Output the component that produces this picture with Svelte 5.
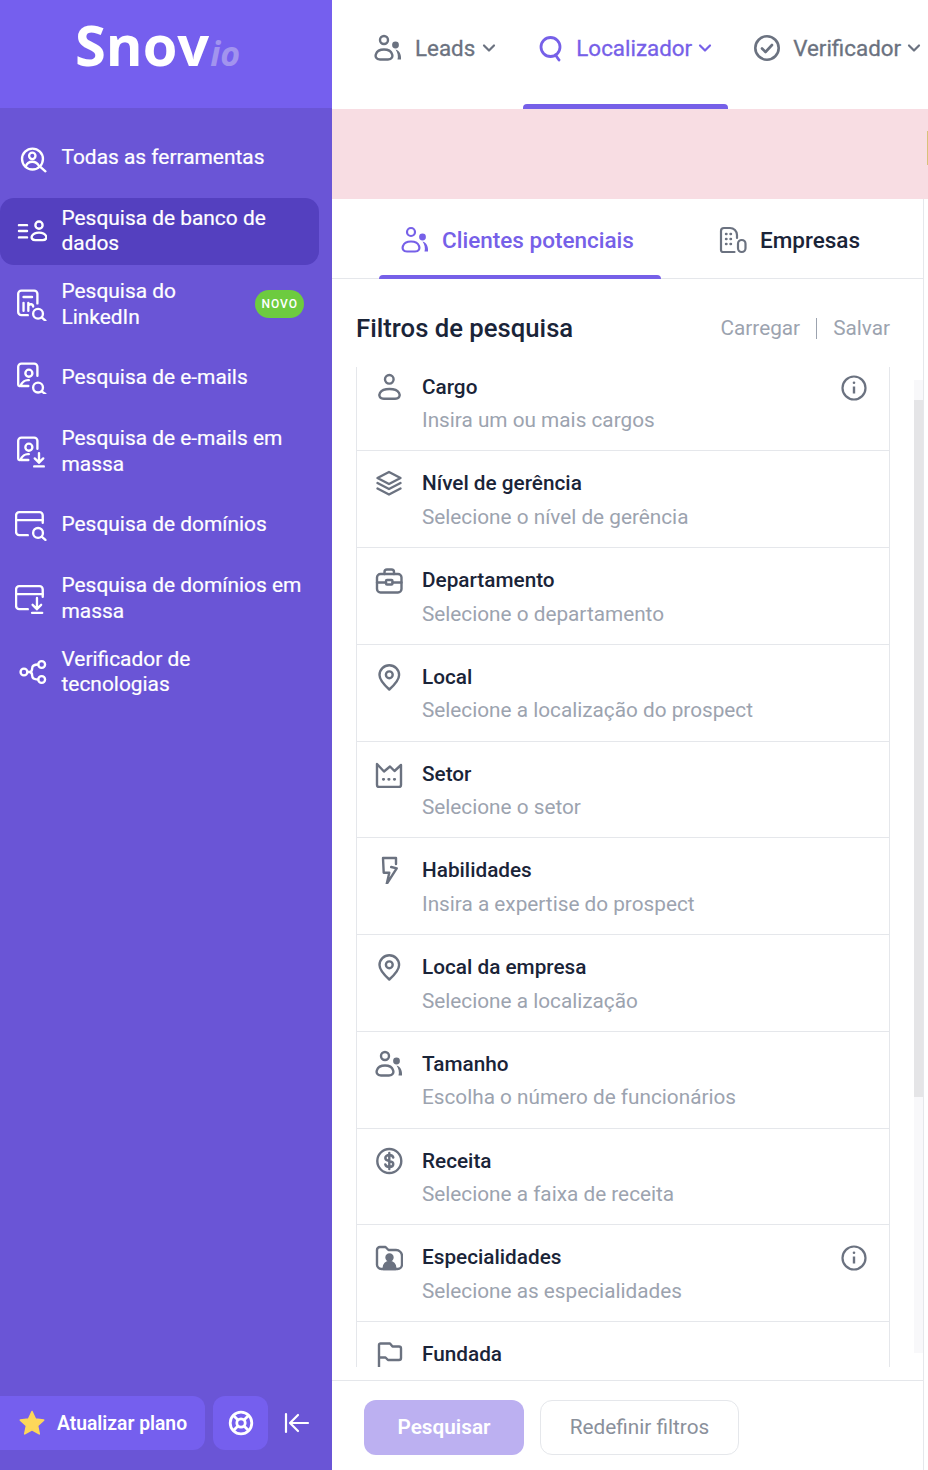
<script>
  const tools = [
    { label: 'Todas as ferramentas', icon: 'all' },
    { label: 'Pesquisa de banco de dados', icon: 'db', active: true },
    { label: 'Pesquisa do LinkedIn', icon: 'in', badge: 'NOVO', narrow: true },
    { label: 'Pesquisa de e-mails', icon: 'mail' },
    { label: 'Pesquisa de e-mails em massa', icon: 'maildown' },
    { label: 'Pesquisa de domínios', icon: 'domain' },
    { label: 'Pesquisa de domínios em massa', icon: 'domaindown' },
    { label: 'Verificador de tecnologias', icon: 'tech', narrow: true }
  ];

  const filters = [
    { title: 'Cargo', hint: 'Insira um ou mais cargos', icon: 'person', info: true },
    { title: 'Nível de gerência', hint: 'Selecione o nível de gerência', icon: 'layers' },
    { title: 'Departamento', hint: 'Selecione o departamento', icon: 'case' },
    { title: 'Local', hint: 'Selecione a localização do prospect', icon: 'pin' },
    { title: 'Setor', hint: 'Selecione o setor', icon: 'factory' },
    { title: 'Habilidades', hint: 'Insira a expertise do prospect', icon: 'bolt' },
    { title: 'Local da empresa', hint: 'Selecione a localização', icon: 'pin' },
    { title: 'Tamanho', hint: 'Escolha o número de funcionários', icon: 'people' },
    { title: 'Receita', hint: 'Selecione a faixa de receita', icon: 'dollar' },
    { title: 'Especialidades', hint: 'Selecione as especialidades', icon: 'folder', info: true },
    { title: 'Fundada', icon: 'flag' }
  ];
</script>

{#snippet chevron()}
  <svg class="chev" width="14" height="14" viewBox="0 0 14 14" fill="none" stroke="currentColor" stroke-width="2.200" stroke-linecap="round" stroke-linejoin="round"><path d="M2 4.500l5 5 5-5"/></svg>
{/snippet}

{#snippet people()}
  <circle cx="10" cy="6" r="4"/>
  <path d="M6 25.500c-4 0-5-3-4-5.500 1-3 4.500-4.500 8-4.500s7 1.500 8 4.500c1 2.500 0 5.500-4 5.500z"/>
  <circle cx="21.500" cy="11" r="3.400" fill="currentColor" stroke="none"/>
  <path d="M21.500 15.500c4 1 6 5 5.500 10h-3.500c1-3.500 0-7-2-10z" fill="currentColor" stroke="none"/>
{/snippet}

{#snippet toolIcon(name)}
  <svg width="32" height="32" viewBox="0 0 30 30" fill="none" stroke="currentColor" stroke-width="2.200" stroke-linecap="round" stroke-linejoin="round">
    {#if name === 'all'}
      <circle cx="16.400" cy="16" r="9.800"/><circle cx="16.200" cy="13" r="3"/><path d="M10 23c1-3 3.500-4.500 6.200-4.500s5 1.500 6.300 4"/><path d="M23.500 23l5 4.500"/>
    {:else if name === 'db'}
      <path d="M3.700 9.500h7.600M3.700 15h7.600M3.700 21h7.600"/><circle cx="22.500" cy="9.500" r="3.400"/><path d="M19 23.500c-3 0-4-2-3-4 1-2 3.500-3 6.500-3s5.500 1 6.500 3c1 2 0 4-3 4z"/>
    {:else if name === 'in'}
      <path d="M12 24.500H6a3 3 0 0 1-3-3V4.500a3 3 0 0 1 3-3h12a3 3 0 0 1 3 3v9"/><path d="M8 7.500h8M8 13v7.500M12.500 20.500V13M12.500 15.500c1.500-2 4.500-1.500 4.500 1"/><circle cx="21.600" cy="23.200" r="4.600"/><path d="M25 26.700l3.500 3"/>
    {:else if name === 'mail'}
      <path d="M21 13V4.500a3 3 0 0 0-3-3H6a3 3 0 0 0-3 3V21c0 1.500 1.500 2 2.500 1"/><circle cx="13" cy="10.500" r="3.300"/><path d="M5.500 22c1-3 4-5.500 7.500-5"/><path d="M5.500 22.500h7"/><circle cx="21.600" cy="24" r="4.600"/><path d="M25 27.500l3.500 2.500"/>
    {:else if name === 'maildown'}
      <path d="M21 12V4.500a3 3 0 0 0-3-3H6a3 3 0 0 0-3 3V21c0 1.500 1.500 2 2.500 1"/><circle cx="13" cy="10.500" r="3.300"/><path d="M5.500 22c1-3 4-5.500 7.500-5"/><path d="M5.500 22.500h7"/><path d="M22.500 16v9M18.500 21l4 4 4-4M18 28.500h9"/>
    {:else if name === 'domain'}
      <path d="M12 24.500H4a3 3 0 0 1-3-3V6a3 3 0 0 1 3-3h19a3 3 0 0 1 3 3v7"/><path d="M1 10.500h25"/><circle cx="21.600" cy="22.400" r="4.600"/><path d="M25 26l3.500 3"/>
    {:else if name === 'domaindown'}
      <path d="M12 24.500H4a3 3 0 0 1-3-3V6a3 3 0 0 1 3-3h19a3 3 0 0 1 3 3v7"/><path d="M1 10.500h25"/><path d="M20.600 14v10.500M16.500 20.500l4 4 4-4M16 28h9.500"/>
    {:else if name === 'tech'}
      <circle cx="8.400" cy="15" r="3.200"/><circle cx="25" cy="8" r="3.200"/><circle cx="25" cy="22" r="3.200"/><path d="M11.600 15h2c2 0 2.500-1.500 2.500-3.500 0-2.500 1.500-3.500 5.700-3.500M13.600 15c2 0 2.500 1.500 2.500 3.500 0 2.500 1.500 3.500 5.700 3.500"/>
    {/if}
  </svg>
{/snippet}

{#snippet filterIcon(name)}
  <svg width="28" height="28" viewBox="0 0 28 28" fill="none" stroke="currentColor" stroke-width="2.400" stroke-linecap="round" stroke-linejoin="round">
    {#if name === 'person'}
      <circle cx="14.300" cy="6.300" r="4.300"/><path d="M9 25.800c-4.500 0-5.500-3.500-4-6 1.500-2.500 5-3.800 9.500-3.800s8 1.300 9.500 3.800c1.500 2.500.5 6-4 6z"/>
    {:else if name === 'layers'}
      <path d="M14 3l11.500 6L14 15 2.500 9z"/><path d="M2.500 14L14 20l11.500-6"/><path d="M2.500 19.500L14 25.500l11.500-6"/>
    {:else if name === 'case'}
      <path d="M9.500 8V6a2.500 2.500 0 0 1 2.500-2.500h4.500A2.500 2.500 0 0 1 19 6v2"/><rect x="2" y="8" width="24.500" height="18.500" rx="3.500"/><path d="M2 16.500h9M17.500 16.500h9"/><rect x="11" y="14" width="6.500" height="4.500" rx="1"/>
    {:else if name === 'pin'}
      <path d="M14.300 26.500c-5-4.500-9.800-9.500-9.800-14.500a9.800 9.800 0 0 1 19.600 0c0 5-4.800 10-9.800 14.500z"/><circle cx="14.300" cy="11.800" r="3.400"/>
    {:else if name === 'factory'}
      <path d="M2 4v21a2 2 0 0 0 2 2h20a2 2 0 0 0 2-2V5l-6.500 6-4.500-4.500-6 5z"/><path d="M8.300 19.300h.4M13.700 19.300h.4M19.300 19.300h.4" stroke-width="2.800"/>
    {:else if name === 'bolt'}
      <path d="M21 8V2H8l.7 14.700h5.600L11.700 28l10-15.700-5.500-1.300"/>
    {:else if name === 'people'}
      {@render people()}
    {:else if name === 'dollar'}
      <circle cx="14.300" cy="14" r="12"/><path d="M18.300 10.500c-.5-1.500-2-2.500-4-2.500-2.500 0-4 1.300-4 3s1.500 2.500 4 3 4 1.300 4 3-1.500 3-4 3c-2 0-3.500-1-4-2.500M14.300 6v16"/>
    {:else if name === 'folder'}
      <path d="M2 21V7a3 3 0 0 1 3-3h5.500l3 3H21a6 6 0 0 1 6 6v8.500a4.500 4.500 0 0 1-4.500 4.500h-16A4.500 4.500 0 0 1 2 21z"/><circle cx="14.500" cy="14.500" r="3" fill="currentColor"/><path d="M8.500 26c0-5 3-7 6-7s6 2 6 7z" fill="currentColor"/>
    {:else if name === 'flag'}
      <path d="M4 29V5a1.500 1.500 0 0 1 1.500-1.500H15l2.500 3H24a2 2 0 0 1 2 2V18a2 2 0 0 1-2 2H13l-2.500-2.500H4"/>
    {/if}
  </svg>
{/snippet}

<div class="page">
  <aside class="sidebar">
    <div class="logo"><span class="snov">Snov</span><span class="io">io</span></div>
    <nav class="tools">
      {#each tools as tool}
        <div class="tool" class:active={tool.active}>
          <span class="tool-icon">{@render toolIcon(tool.icon)}</span>
          <span class="tool-label" class:narrow={tool.narrow}>{tool.label}</span>
          {#if tool.badge}<span class="badge">{tool.badge}</span>{/if}
        </div>
      {/each}
    </nav>
    <div class="side-foot">
      <button class="upgrade">
        <svg width="26" height="26" viewBox="0 0 26 26"><path d="M13 1.500l3.500 7.600 8.200 1-6.100 5.600 1.700 8.200-7.300-4.100-7.300 4.100 1.700-8.200L1.300 10.100l8.200-1z" fill="#fdd75a" stroke="#fdd75a" stroke-width="1.500" stroke-linejoin="round"/></svg>
        Atualizar plano
      </button>
      <button class="help" aria-label="Ajuda">
        <svg width="26" height="26" viewBox="0 0 26 26" fill="none" stroke="currentColor" stroke-width="2.800"><circle cx="13" cy="13" r="10.800"/><circle cx="13" cy="13" r="4.200"/><path d="M5.500 5.500l4.700 4.700M20.500 5.500l-4.700 4.700M5.500 20.500l4.700-4.700M20.500 20.500l-4.700-4.700"/></svg>
      </button>
      <svg class="collapse" width="26" height="22" viewBox="0 0 26 22" fill="none" stroke="currentColor" stroke-width="2.200" stroke-linecap="round" stroke-linejoin="round"><path d="M2 2v18M24 11H7M14 3l-8 8 8 8"/></svg>
    </div>
  </aside>

  <main class="main">
    <header class="topnav">
      <div class="nav-item">
        <svg width="28" height="28" viewBox="0 0 28 28" fill="none" stroke="currentColor" stroke-width="2.400" stroke-linecap="round" stroke-linejoin="round">{@render people()}</svg>
        <span>Leads</span>{@render chevron()}
      </div>
      <div class="nav-item current">
        <svg width="26" height="28" viewBox="0 0 26 28" fill="none" stroke="currentColor" stroke-width="2.800" stroke-linecap="round"><circle cx="12.500" cy="13" r="9.500"/><path d="M17.500 21l3.500 5"/></svg>
        <span>Localizador</span>{@render chevron()}
      </div>
      <div class="nav-item">
        <svg width="28" height="28" viewBox="0 0 28 28" fill="none" stroke="currentColor" stroke-width="2.600" stroke-linecap="round" stroke-linejoin="round"><circle cx="14" cy="14" r="11.700"/><path d="M9 14.500l3.500 3.500 6.500-7"/></svg>
        <span>Verificador</span>{@render chevron()}
      </div>
    </header>

    <div class="notice"><span class="notice-edge"></span></div>

    <section class="panel">
      <div class="tabs">
        <div class="tab on">
          <svg width="28" height="28" viewBox="0 0 28 28" fill="none" stroke="currentColor" stroke-width="2.200" stroke-linecap="round" stroke-linejoin="round">{@render people()}</svg>
          Clientes potenciais
        </div>
        <div class="tab">
          <svg class="bld" width="28" height="28" viewBox="0 0 28 28" fill="none" stroke="currentColor" stroke-width="2.200" stroke-linecap="round" stroke-linejoin="round"><path d="M15.500 26H4a2 2 0 0 1-2-2V5a3 3 0 0 1 3-3h6a7 7 0 0 1 7 7v3"/><rect x="19" y="14" width="7.500" height="12" rx="3.700"/><path d="M7 8h.5M11.500 8h.5M7 13h.5M11.500 13h.5M7 18h.5M11.500 18h.5" stroke-width="2.400"/></svg>
          Empresas
        </div>
      </div>

      <div class="filters-head">
        <h2>Filtros de pesquisa</h2>
        <div class="head-links"><span>Carregar</span><i></i><span>Salvar</span></div>
      </div>

      <div class="scroll-area">
        <div class="filter-list">
          {#each filters as f}
            <div class="filter">
              <span class="filter-icon">{@render filterIcon(f.icon)}</span>
              <div class="filter-text">
                <div class="filter-title">{f.title}</div>
                {#if f.hint}<div class="filter-hint">{f.hint}</div>{/if}
              </div>
              {#if f.info}
                <svg class="info" width="26" height="26" viewBox="0 0 26 26" fill="none" stroke="currentColor" stroke-width="2.200"><circle cx="13" cy="13" r="11.500"/><path d="M13 11.500v7" stroke-width="2.400"/><circle cx="13" cy="7.800" r="1.300" fill="currentColor" stroke="none"/></svg>
              {/if}
            </div>
          {/each}
        </div>
        <div class="scrollbar"><div class="thumb"></div></div>
      </div>

      <div class="actions">
        <button class="primary">Pesquisar</button>
        <button class="secondary">Redefinir filtros</button>
      </div>
    </section>
  </main>
</div>

<style>
  :global(body) {
    margin: 0;
    background: #fff;
  }

  .page {
    display: flex;
    width: 928px;
    height: 1470px;
    overflow: hidden;
    font-family: Roboto, "Liberation Sans", sans-serif;
  }

  button {
    font-family: inherit;
    border: none;
    cursor: pointer;
  }

  /* sidebar */
  .sidebar {
    width: 332px;
    flex: none;
    display: flex;
    flex-direction: column;
    background: #6a55d6;
    color: #fff;
  }

  .logo {
    height: 108px;
    flex: none;
    background: #755fee;
    padding-left: 75px;
    box-sizing: border-box;
    line-height: 88px;
  }

  .snov {
    font-family: "Open Sans", sans-serif;
    font-weight: 700;
    font-size: 56px;
  }

  .io {
    font-family: "Open Sans", sans-serif;
    font-style: italic;
    font-weight: 700;
    font-size: 34px;
    color: #a294ee;
    margin-left: 1px;
  }

  .tools {
    flex: 1;
    display: flex;
    flex-direction: column;
    gap: 6.5px;
    padding: 16px 13px 0 0;
  }

  .tool {
    height: 67px;
    display: flex;
    align-items: center;
    padding: 0 15px;
    border-radius: 0 14px 14px 0;
    font-size: 20.900px;
    line-height: 25.500px;
    font-weight: 400;
    -webkit-text-stroke: 0.2px #fff;
  }

  .tool.active {
    background: #5440bf;
    border-radius: 14px;
  }

  .tool-icon {
    width: 46.500px;
    flex: none;
    display: flex;
  }

  .tool-label {
    flex: 1;
  }

  .tool-label.narrow {
    max-width: 150px;
  }

  .badge {
    margin: -1px 0 0 auto;
    background: #6dcb3f;
    font-size: 12px;
    font-weight: 500;
    letter-spacing: 1px;
    line-height: 28px;
    padding: 0 6px;
    border-radius: 14px;
    -webkit-text-stroke: 0;
  }

  .side-foot {
    display: flex;
    align-items: center;
    height: 54px;
    margin-bottom: 20px;
  }

  .upgrade {
    width: 205px;
    height: 54px;
    display: flex;
    align-items: center;
    gap: 12px;
    padding: 0 0 0 19px;
    background: #755fee;
    color: #fff;
    border-radius: 0 12px 12px 0;
    font-size: 19.300px;
    font-weight: 600;
  }

  .help {
    width: 55px;
    height: 54px;
    margin-left: 8px;
    display: flex;
    align-items: center;
    justify-content: center;
    padding: 0;
    background: #755fee;
    color: #fff;
    border-radius: 12px;
  }

  .collapse {
    margin-left: 16px;
  }

  /* main column */
  .main {
    flex: 1;
    min-width: 0;
    display: flex;
    flex-direction: column;
  }

  .topnav {
    height: 109px;
    flex: none;
    box-sizing: border-box;
    display: flex;
    align-items: center;
    gap: 42px;
    padding: 0 0 13px 42px;
    white-space: nowrap;
    color: #6b7280;
    font-size: 22.400px;
    -webkit-text-stroke: 0.3px currentColor;
  }

  .nav-item {
    position: relative;
    display: flex;
    align-items: center;
    gap: 12px;
  }

  .nav-item:first-child {
    gap: 13px;
  }

  .nav-item:last-child {
    margin-left: -1px;
  }

  .nav-item :global(.chev) {
    margin-left: -6px;
  }

  .nav-item.current {
    color: #7660e8;
  }

  .nav-item.current::after {
    content: '';
    position: absolute;
    left: -15px;
    right: -16px;
    top: 70px;
    height: 5px;
    background: #7660e8;
    border-radius: 4px 4px 0 0;
  }

  .notice {
    height: 90px;
    flex: none;
    position: relative;
    background: #f8dde3;
  }

  .notice-edge {
    position: absolute;
    right: 0;
    top: 22px;
    width: 1px;
    height: 34px;
    background: #d9c27a;
  }

  .panel {
    flex: 1;
    min-height: 0;
    display: flex;
    flex-direction: column;
    border-right: 1px solid #e5e7eb;
    margin-right: 4px;
  }

  .tabs {
    height: 80px;
    flex: none;
    box-sizing: border-box;
    display: flex;
    border-bottom: 1px solid #e5e7eb;
    padding-left: 47px;
    font-size: 22.500px;
    font-weight: 500;
    color: #1a2438;
  }

  .tab {
    position: relative;
    display: flex;
    align-items: center;
    gap: 13px;
    padding-top: 3px;
  }

  .tab :global(.bld) {
    color: #6b7280;
  }

  .tab.on {
    width: 282px;
    box-sizing: border-box;
    padding-right: 5px;
    justify-content: center;
    color: #7660e8;
  }

  .tab:not(.on) {
    margin-left: 58px;
  }

  .tab.on::after {
    content: '';
    position: absolute;
    left: 0;
    right: 0;
    bottom: -1px;
    height: 4px;
    background: #7660e8;
    border-radius: 4px 4px 0 0;
  }

  .filters-head {
    height: 88px;
    flex: none;
    box-sizing: border-box;
    display: flex;
    align-items: center;
    justify-content: space-between;
    padding: 10px 33px 0 24px;
  }

  h2 {
    margin: 0;
    font-size: 25.700px;
    font-weight: 500;
    color: #1a2438;
  }

  .head-links {
    display: flex;
    align-items: center;
    gap: 16px;
    font-size: 20.750px;
    color: #9ca3af;
  }

  .head-links i {
    width: 1px;
    height: 21px;
    background: #9ca3af;
  }

  .scroll-area {
    height: 1000px;
    flex: none;
    position: relative;
    overflow: hidden;
  }

  .filter-list {
    width: 534px;
    margin: -12.500px 0 0 24px;
    box-sizing: border-box;
    border-left: 1px solid #e5e7eb;
    border-right: 1px solid #e5e7eb;
  }

  .filter {
    height: 96.750px;
    box-sizing: border-box;
    display: flex;
    padding: 18px 22px 0 18px;
    border-bottom: 1px solid #e5e7eb;
  }

  .filter-icon {
    width: 47px;
    flex: none;
    display: flex;
    color: #6b7280;
  }

  .filter-text {
    flex: 1;
  }

  .filter-title {
    font-size: 20.750px;
    line-height: 28px;
    font-weight: 500;
    color: #1a2438;
  }

  .filter-hint {
    margin-top: 5.500px;
    font-size: 20.750px;
    line-height: 28px;
    color: #9ca3af;
  }

  .info {
    margin-top: 2px;
    color: #6b7280;
  }

  .scrollbar {
    position: absolute;
    top: 13px;
    bottom: 14px;
    right: 0;
    width: 9px;
    background: #f8f8fa;
  }

  .thumb {
    height: 697px;
    margin-top: 20px;
    background: #e5e5e7;
  }

  .actions {
    flex: 1;
    display: flex;
    gap: 16px;
    padding: 19px 0 0 32px;
    border-top: 1px solid #e5e7eb;
    margin-top: 13px;
  }

  .actions button {
    height: 55px;
    padding-bottom: 3px;
    border-radius: 12px;
    font-size: 20.750px;
  }

  .primary {
    width: 160px;
    background: #bcb0f1;
    color: #fff;
    font-weight: 600;
  }

  .secondary {
    width: 199px;
    background: #fff;
    border: 1px solid #e5e7eb;
    color: #8a909b;
  }
</style>
